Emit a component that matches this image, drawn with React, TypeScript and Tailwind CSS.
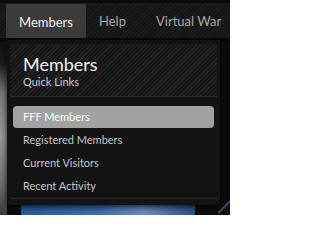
import React from "react";

const font = { fontFamily: '"Lato", "DejaVu Sans", sans-serif' };

export default function App() {
  const items = ["Registered Members", "Current Visitors", "Recent Activity"];
  return (
    <div
      className="relative w-[230px] h-[215px] overflow-hidden bg-[#0c0c0c] flex flex-col"
      style={font}
    >
      <div className="h-[4px] bg-[#0a0a0a] border-b border-[#1a1a1a]" />
      <nav className="h-[34px] flex items-stretch bg-[#1a1a1a] bg-[repeating-linear-gradient(135deg,#1d1d1d_0px,#1d1d1d_1px,#151515_1px,#151515_3px)] pl-[6px]">
        <div className="w-[80px] h-[36px] bg-[#3b3b3b] flex items-center justify-center text-[13px] text-[#f2f2f2] pt-[1px]">
          Members
        </div>
        <div className="w-[53px] flex items-center justify-center text-[13px] text-[#a7a7a7] pt-[2px]">
          Help
        </div>
        <div className="flex items-center text-[13px] text-[#a7a7a7] pl-[17px] pt-[2px] whitespace-nowrap">
          Virtual War
        </div>
      </nav>
      <div className="h-[4px] bg-[#070707]" />
      <div className="flex-1 flex">
        <div className="w-[7px] bg-[linear-gradient(180deg,#111_0%,#1a1a1a_12%,#7b7b7b_30%,#9a9a9a_55%,#6a6a6a_85%,#3a3a3a_100%)]" />
        <div className="flex-1 flex flex-col justify-end">
          <div className="h-[10px] ml-[14px] mr-[35px] bg-[linear-gradient(90deg,#2a5a9a,#3c6fb0_45%,#6e8cc0_70%,#2c4f86)]" />
        </div>
      </div>
      <div className="absolute right-0 bottom-0 w-[12px] h-[16px] bg-[linear-gradient(135deg,transparent_45%,#5a4a80_50%,transparent_60%)]" />

      <div className="absolute left-[7px] top-[40px] w-[213px] h-[165px] bg-[#131313] rounded-b-[5px] shadow-[0_2px_6px_rgba(0,0,0,0.8)] flex flex-col">
        <div className="mx-[3px] mt-[4px] h-[53px] bg-[#1b1b1b] bg-[repeating-linear-gradient(135deg,#242424_0px,#242424_1px,#171717_1px,#171717_3px)] border-b border-[#2c2c2c] pl-[13px] pt-[10px] flex flex-col">
          <div className="text-[18px] leading-[20px] text-[#f4f4f4]">Members</div>
          <div className="text-[11px] leading-[13px] text-[#c4cad2] mt-[1px]">Quick Links</div>
        </div>
        <div className="flex flex-col mt-[9px] mx-[6px]">
          <div className="h-[22px] mb-[1px] rounded-[4px] bg-[#a2a2a2] flex items-center pl-[10px] text-[11px] text-white">
            FFF Members
          </div>
          {items.map((t) => (
            <div
              key={t}
              className="h-[23px] flex items-center pl-[10px] text-[11px] text-[#c6c6c6]"
            >
              {t}
            </div>
          ))}
        </div>
        <div className="mx-[3px] border-t border-[#2a2a2a]" />
      </div>
    </div>
  );
}
